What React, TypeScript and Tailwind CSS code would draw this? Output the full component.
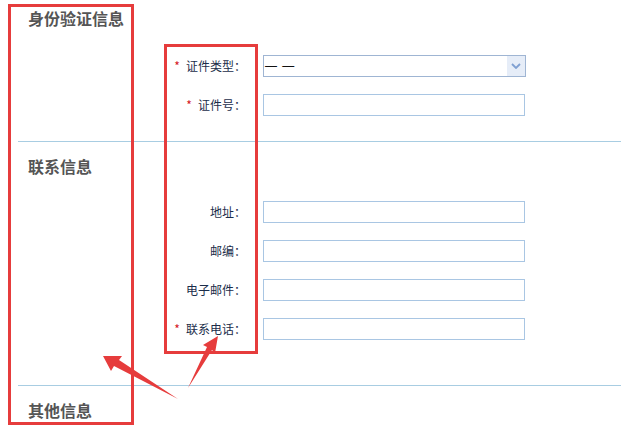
import React from "react";

const Row = ({ label, required, children }: { label: string; required?: boolean; children?: React.ReactNode }) => (
  <div className="flex items-center h-[22px]">
    <div className="w-[246px] text-right text-[12px] leading-[22px] text-[#1b2d4a] whitespace-nowrap">
      {required && <span className="text-[#d4141e] mr-[6px]">*</span>}
      {label}：
    </div>
    <div className="ml-[17px]">
      {children ?? <div className="w-[262px] h-[22px] border border-[#a9c6e3] bg-white" />}
    </div>
  </div>
);

const Select = () => (
  <div className="w-[263px] h-[22px] border border-[#9fb5d3] bg-white flex items-center">
    <span
      className="flex-1 pl-[1px] text-[12px] text-[#111] leading-[20px] tracking-[1px]"
      style={{ fontFamily: '"Liberation Sans", sans-serif' }}
    >
      — —
    </span>
    <div className="w-[18px] h-[20px] bg-[#e6edf8] flex items-center justify-center">
      <svg width="10" height="6" viewBox="0 0 10 6">
        <path d="M1 1 L5 5 L9 1" fill="none" stroke="#7fa0d2" strokeWidth="1.8" />
      </svg>
    </div>
  </div>
);

const Heading = ({ children }: { children: React.ReactNode }) => (
  <div className="pl-[28px] h-[20px] leading-[20px] text-[16px] font-bold text-[#555555]">{children}</div>
);

export default function App() {
  return (
    <div
      className="relative w-[621px] h-[427px] bg-white overflow-hidden flex flex-col"
      style={{ fontFamily: '"Noto Sans CJK SC", "Noto Sans", sans-serif' }}
    >
      <div className="pt-[8px] flex flex-col">
        <Heading>身份验证信息</Heading>
        <div className="pt-[27px] flex flex-col gap-[17px]">
          <Row label="证件类型" required>
            <Select />
          </Row>
          <Row label="证件号" required />
        </div>
        <div className="ml-[18px] mt-[25px] h-px bg-[#a8cde2]" />
      </div>
      <div className="pt-[14px] flex flex-col">
        <Heading>联系信息</Heading>
        <div className="pt-[25px] flex flex-col gap-[17px]">
          <Row label="地址" />
          <Row label="邮编" />
          <Row label="电子邮件" />
          <Row label="联系电话" required />
        </div>
        <div className="ml-[18px] mt-[45px] h-px bg-[#a8cde2]" />
      </div>
      <div className="pt-[14px] flex flex-col">
        <Heading>其他信息</Heading>
      </div>

      {/* annotation overlays */}
      <div className="absolute left-[8px] top-[4px] w-[126px] h-[421px] border-[3px] border-[#e63c3c]" />
      <div className="absolute left-[164px] top-[44px] w-[94px] h-[310px] border-[3px] border-[#e63c3c]" />
      <svg className="absolute left-0 top-0" width="621" height="427" viewBox="0 0 621 427">
        <polygon points="103,356 122,356 119,360 178,399 114,366 111,371" fill="#e63c3c" />
        <polygon points="218,336 203,345 207,347 188,388 212,350 215,353" fill="#e63c3c" />
      </svg>
    </div>
  );
}
